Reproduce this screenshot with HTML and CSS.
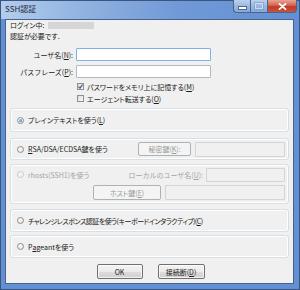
FILE: index.html
```html
<!DOCTYPE html>
<html lang="ja">
<head>
  <meta charset="UTF-8" />
  <title>SSH認証</title>
  <link rel="stylesheet" href="styles.css">
</head>
<body>
  <div class="window">
    <div class="titlebar">
      <span class="title">SSH認証</span>
      <div class="caption-btns">
        <span class="cbtn min"><i></i></span>
        <span class="cbtn max"><i></i></span>
        <span class="cbtn close">
          <svg width="9" height="7" viewBox="0 0 9 7"><path d="M1.5 0.8 L7.5 6.2 M7.5 0.8 L1.5 6.2" stroke="#fff" stroke-width="1.8" stroke-linecap="round"/></svg>
        </span>
      </div>
    </div>
    <div class="frame">
      <div class="client">
        <div class="row">ログイン中: <span class="redacted"></span></div>
        <div class="row second">認証が必要です.</div>

        <div class="field-row">
          <label>ユーザ名(<u>N</u>):</label>
          <div class="text focus"></div>
        </div>
        <div class="field-row pass">
          <label>パスフレーズ(<u>P</u>):</label>
          <div class="text"></div>
        </div>

        <div class="check-row">
          <span class="check on">
            <svg width="5" height="5" viewBox="0 0 5 5"><path d="M0.5 2.6 L2 4.2 L4.6 0.6" fill="none" stroke="#3c5a96" stroke-width="1.2"/></svg>
          </span>
          パスワードをメモリ上に記憶する(<u>M</u>)
        </div>
        <div class="check-row second-check">
          <span class="check"></span>
          エージェント転送する(<u>O</u>)
        </div>

        <div class="group g1">
          <div class="opt"><span class="radio on"></span>プレインテキストを使う(<u>L</u>)</div>
        </div>

        <div class="group g2">
          <div class="opt"><span class="radio"></span><u>R</u>SA/DSA/ECDSA鍵を使う</div>
          <span class="btn disabled keybtn">秘密鍵(<u>K</u>):</span>
          <div class="text disabled keyfile"></div>
        </div>

        <div class="group g3">
          <div class="g3-row">
            <div class="opt off"><span class="radio"></span>rhosts(SSH1)を使う</div>
            <span class="off-label">ローカルのユーザ名(<u>U</u>):</span>
            <div class="text disabled localuser"></div>
          </div>
          <div class="g3-row lower">
            <span class="btn disabled hostbtn">ホスト鍵(<u>E</u>)</span>
            <div class="text disabled hostfile"></div>
          </div>
        </div>

        <div class="group g4">
          <div class="opt tight"><span class="radio"></span>チャレンジレスポンス認証を使う(キーボードインタラクティブ)(<u>C</u>)</div>
        </div>

        <div class="group g5">
          <div class="opt"><span class="radio"></span>P<u>a</u>geantを使う</div>
        </div>

        <div class="buttons">
          <span class="btn ok">OK</span>
          <span class="btn cancel">接続断(<u>D</u>)</span>
        </div>
      </div>
    </div>
  </div>
</body>
</html>
```

FILE: styles.css
```css
body {
  margin: 0;
  font-family: "Noto Sans CJK JP", "Liberation Sans", sans-serif;
  font-size: 7px;
  font-feature-settings: "palt";
  color: #1a1a1a;
}

.window {
  width: 300px;
  height: 290px;
  box-sizing: border-box;
  border: 1px solid #3a5680;
  background: #6390d2;
  display: flex;
  flex-direction: column;
}

.titlebar {
  height: 18px;
  display: flex;
  align-items: flex-start;
  background: linear-gradient(to right, #b4cdec 0%, #8db0e0 30%, #7099d6 60%, #6390d2 100%);
}

.title {
  margin: 3px 0 0 4px;
  font-size: 8px;
  line-height: 10px;
  color: #1d2a3c;
}

.caption-btns {
  margin: -1px 2px 0 auto;
  display: flex;
  height: 13px;
}

.cbtn {
  box-sizing: border-box;
  height: 13px;
  display: flex;
  align-items: center;
  justify-content: center;
  border: 1px solid #4b6487;
  border-top: none;
}

.cbtn.min {
  width: 17px;
  border-right: none;
  border-radius: 0 0 0 4px;
  background: linear-gradient(#bcd0ec, #9bb8e1 50%, #86a8da);
}

.cbtn.max {
  width: 17px;
  border-right: none;
  background: linear-gradient(#bcd0ec, #9bb8e1 50%, #86a8da);
}

.cbtn.min i {
  width: 7px;
  height: 2px;
  margin-top: 4px;
  background: #fff;
  box-shadow: 0 0 0 1px #4d6a93;
}

.cbtn.max i {
  width: 6px;
  height: 4px;
  border: 1px solid #e4ecf7;
  box-shadow: 0 0 0 1px #7f9cc6;
  opacity: 0.7;
}

.cbtn.close {
  width: 30px;
  border-radius: 0 0 4px 0;
  background: linear-gradient(#e6a493, #d4634f 45%, #c23a28 55%, #c9533a);
}

.frame {
  flex: 1;
  display: flex;
  padding: 0 5px 5px 4px;
}

.client {
  flex: 1;
  background: #f0f0f0;
  border: 1px solid #45638e;
  padding: 0 4px;
}

.row {
  height: 10px;
  line-height: 10px;
  display: flex;
  align-items: center;
}

.row.second {
  margin-top: 1px;
}

.redacted {
  display: inline-block;
  width: 46px;
  height: 7px;
  margin-left: 3px;
  background: #d6d6d6;
}

.field-row {
  display: flex;
  align-items: center;
  height: 13px;
  margin-top: 7px;
}

.field-row.pass {
  margin-top: 4px;
}

.field-row label {
  width: 63px;
  text-align: right;
  margin-right: 3px;
  font-feature-settings: normal;
}

.text {
  box-sizing: border-box;
  width: 135px;
  height: 13px;
  background: #fff;
  border: 1px solid #b4b8bf;
  border-radius: 1px;
}

.text.focus {
  border-color: #7fb1e2;
}

.text.disabled {
  background: #f0f0f0;
  border-color: #d2d4d6;
}

.check-row {
  display: flex;
  align-items: center;
  height: 9px;
  margin-top: 4px;
  padding-left: 67px;
}

.check-row.second-check {
  margin-top: 3px;
}

.check {
  box-sizing: border-box;
  width: 7px;
  height: 7px;
  margin-right: 3px;
  border: 1px solid #8e8f8f;
  background: linear-gradient(135deg, #dcdcdc, #fbfbfb);
  display: flex;
  align-items: center;
  justify-content: center;
}

.group {
  box-sizing: border-box;
  display: flex;
  align-items: center;
  border: 1px solid #d5dfe5;
  border-radius: 3px;
  box-shadow: inset 0 0 0 1px #fff;
  padding: 0 3px 0 6px;
}

.g1 { height: 24px; margin-top: 5px; }
.g2 { height: 22px; margin-top: 6px; }
.g4 { height: 23px; margin-top: 5px; }
.g5 { height: 23px; margin-top: 3px; }

.g3 {
  height: 40px;
  margin-top: 4px;
  flex-direction: column;
  align-items: stretch;
  padding-top: 2px;
}

.g3-row {
  display: flex;
  align-items: center;
  height: 15px;
}

.g3-row.lower {
  margin-top: 3px;
}

.opt {
  display: flex;
  align-items: center;
}

.opt.tight {
  letter-spacing: -0.5px;
}

.opt.off,
.off-label {
  color: #a3a3a3;
}

.off-label {
  margin-left: auto;
  margin-right: 3px;
  font-feature-settings: normal;
}

.radio {
  box-sizing: border-box;
  width: 7px;
  height: 7px;
  margin-right: 4px;
  border-radius: 50%;
  border: 1px solid #8e8f8f;
  background: radial-gradient(circle at 40% 40%, #fdfdfd, #dadada);
  display: flex;
  align-items: center;
  justify-content: center;
}

.opt.off .radio {
  border-color: #c9c9c9;
  background: #f4f4f4;
}

.radio.on::after {
  content: "";
  width: 3px;
  height: 3px;
  border-radius: 50%;
  background: radial-gradient(circle at 35% 35%, #8ed0ff, #1e6bc4);
}

.btn {
  box-sizing: border-box;
  display: flex;
  align-items: center;
  justify-content: center;
  height: 15px;
  border: 1px solid #707070;
  border-radius: 2px;
  background: linear-gradient(#f3f3f3, #ebebeb 50%, #dddddd 51%, #cfcfcf);
  box-shadow: inset 0 0 0 1px rgba(255, 255, 255, 0.7);
}

.btn.disabled {
  border-color: #adb2b5;
  background: #f4f4f4;
  color: #9a9a9a;
  box-shadow: none;
}

.keybtn {
  width: 53px;
  height: 14px;
  margin-left: auto;
  margin-right: 4px;
}

.keyfile {
  width: 90px;
  height: 15px;
}

.localuser {
  width: 79px;
  height: 14px;
}

.hostbtn {
  width: 68px;
  margin-left: auto;
  margin-right: 4px;
}

.hostfile {
  width: 120px;
  height: 15px;
}

.buttons {
  display: flex;
  justify-content: center;
  gap: 15px;
  margin-top: 6px;
  padding-left: 2px;
}

.btn.ok {
  width: 46px;
}

.btn.cancel {
  width: 47px;
}
```
